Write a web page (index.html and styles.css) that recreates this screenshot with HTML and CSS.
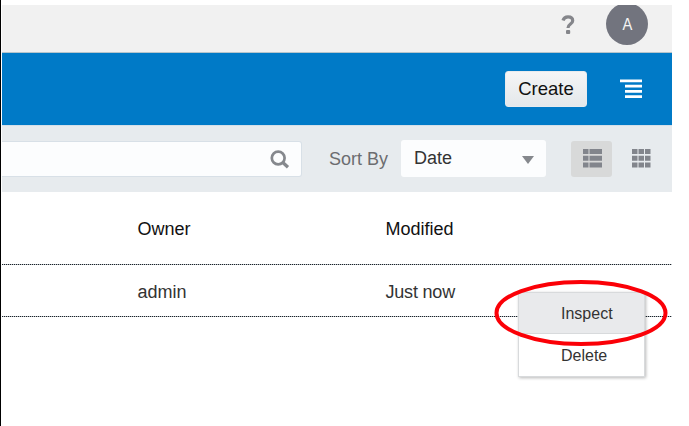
FILE: index.html
```html
<!DOCTYPE html>
<html lang="en">
<head>
<meta charset="utf-8">
<title>Catalog</title>
<link rel="stylesheet" href="styles.css">
</head>
<body>
<div class="app">
  <header class="topbar">
    <svg class="help" width="14" height="20" viewBox="0 0 14 20"><path d="M2 5.500C2.700 3 4.700 1.800 7 1.800c2.800 0 4.700 1.500 4.700 3.900 0 3.500-4.700 3.300-4.700 7.300" fill="none" stroke="#85868b" stroke-width="3.200"/><rect x="5" y="15" width="4.200" height="4" rx="1" fill="#85868b"/></svg>
    <div class="avatar"><span>A</span></div>
  </header>
  <div class="banner">
    <button class="create">Create</button>
    <svg class="menu-icon" width="22" height="20" viewBox="0 0 22 20" fill="#fff"><path d="M0 0.500h22v2.800H0zM5 5.800h17v2.800H5zM5 11h17v2.800H5zM5 16.200h17v2.800H5z"/></svg>
  </div>
  <div class="toolbar">
    <div class="search">
      <svg width="20" height="20" viewBox="0 0 20 20" fill="none" stroke="#85888d"><circle cx="8.200" cy="8" r="6.400" stroke-width="2.700"/><path d="M12.500 12.300l5.500 5" stroke-width="3.300"/></svg>
    </div>
    <span class="sort-label">Sort By</span>
    <div class="select"><span>Date</span><svg width="12" height="8" viewBox="0 0 12 8"><path d="M0 0h12L6 8z" fill="#85888d"/></svg></div>
    <div class="view active"><svg width="19" height="19" viewBox="0 0 19 19" fill="#82858c"><path d="M0 0h5.500v5H0zM6.500 0H19v5H6.500zM0 6.700h5.500v5H0zM6.500 6.700H19v5H6.500zM0 13.500h5.500v5H0zM6.500 13.500H19v5H6.500z"/></svg></div>
    <div class="view grid"><svg width="19" height="19" viewBox="0 0 19 19" fill="#82858c"><path d="M0 0h5.500v5H0zM6.500 0h5.500v5H6.500zM13 0h5.500v5H13zM0 6.700h5.500v5H0zM6.500 6.700h5.500v5H6.500zM13 6.700h5.500v5H13zM0 13.500h5.500v5H0zM6.500 13.500h5.500v5H6.500zM13 13.500h5.500v5H13z"/></svg></div>
  </div>
  <div class="row head"><span>Owner</span><span>Modified</span></div>
  <div class="row"><span>admin</span><span class="now">Just now</span></div>
  <div class="context-menu">
    <div class="item selected">Inspect</div>
    <div class="item">Delete</div>
  </div>
  <svg class="callout" width="174" height="68" viewBox="0 0 174 68"><ellipse cx="87" cy="34" rx="84.500" ry="31" fill="none" stroke="#fb0007" stroke-width="4"/></svg>
</div>
</body>
</html>
```
FILE: styles.css
```css
* { box-sizing: border-box; }
body {
  margin: 0;
  background: #fff;
  font-family: "Liberation Sans", Arial, sans-serif;
  font-size: 18px;
  color: #333;
}
.app {
  position: relative;
  width: 672px;
  height: 426px;
  padding: 5px 0 0 1px;
  border-left: 1px solid #000;
}
.topbar {
  height: 48px;
  display: flex;
  justify-content: flex-end;
  background: #f1f1f1;
  border-bottom: 1px solid #b5c5cc;
  overflow: hidden;
}
.help { margin: 10px 31px 0 0; }
.avatar {
  width: 42px;
  height: 42px;
  margin: -2px 24px 0 0;
  border-radius: 50%;
  background: #72747e;
  color: #f4f4f4;
  font-size: 16px;
  line-height: 43px;
  text-align: center;
}
.avatar span { display: inline-block; transform: scaleX(.92); }
.banner {
  height: 72px;
  display: flex;
  justify-content: flex-end;
  background: #007ac7;
}
.create {
  width: 82px;
  height: 36px;
  margin: 18px 33px 0 0;
  padding: 0;
  border: 1px solid #e8ebee;
  border-radius: 3px;
  background: linear-gradient(#f5f5f6, #e4e8eb);
  font: 18.500px "Liberation Sans", Arial, sans-serif;
  color: #111;
}
.menu-icon { margin: 26px 30px 0 0; }
.toolbar {
  height: 67px;
  display: flex;
  align-items: flex-start;
  background: #e7ebee;
  border-top: 1px solid #d3dfe9;
}
.search {
  width: 300px;
  height: 36px;
  margin-top: 15px;
  padding: 8px 11px 0 0;
  display: flex;
  justify-content: flex-end;
  background: #fcfdfe;
  border: 1px solid #d8e0e7;
  border-left: 0;
  border-radius: 0 3px 3px 0;
}
.sort-label {
  width: 72px;
  margin: 23px 0 0 27px;
  color: #6c6d70;
  line-height: 20px;
}
.select {
  width: 145px;
  height: 37px;
  margin-top: 14px;
  padding: 0 12px 0 13px;
  display: flex;
  align-items: center;
  justify-content: space-between;
  border-radius: 3px;
  background: #fcfdfe;
}
.select svg { margin-top: 2px; }
.view {
  width: 41px;
  height: 36px;
  margin: 15px 0 0 25px;
  padding: 8px 0 0 12px;
  border-radius: 3px;
}
.view svg { display: block; }
.active { background: #d8d9d9; }
.grid { margin-left: 8px; }
.row {
  height: 52px;
  display: grid;
  grid-template-columns: 248px 1fr;
  padding: 17px 0 0 135.500px;
  line-height: 20px;
  background: repeating-linear-gradient(90deg, #1c2228 0 1px, #b9c0c6 1px 2px) bottom / 100% 1px no-repeat;
}
.head {
  height: 73px;
  padding-top: 27px;
  color: #111;
}
.now { letter-spacing: -.2px; }
.context-menu {
  position: absolute;
  left: 517px;
  top: 292px;
  width: 127px;
  height: 85px;
  border: 1px solid #d8dadc;
  background: #fff;
  box-shadow: 1px 1px 3px rgba(0, 0, 0, .28);
  font-size: 16px;
}
.item {
  height: 42px;
  padding-left: 42px;
  line-height: 44px;
}
.selected {
  height: 41px;
  line-height: 42px;
  background: #e9eaec;
  border-bottom: 1px solid #d8dadc;
}
.callout {
  position: absolute;
  left: 493px;
  top: 279px;
}
```
